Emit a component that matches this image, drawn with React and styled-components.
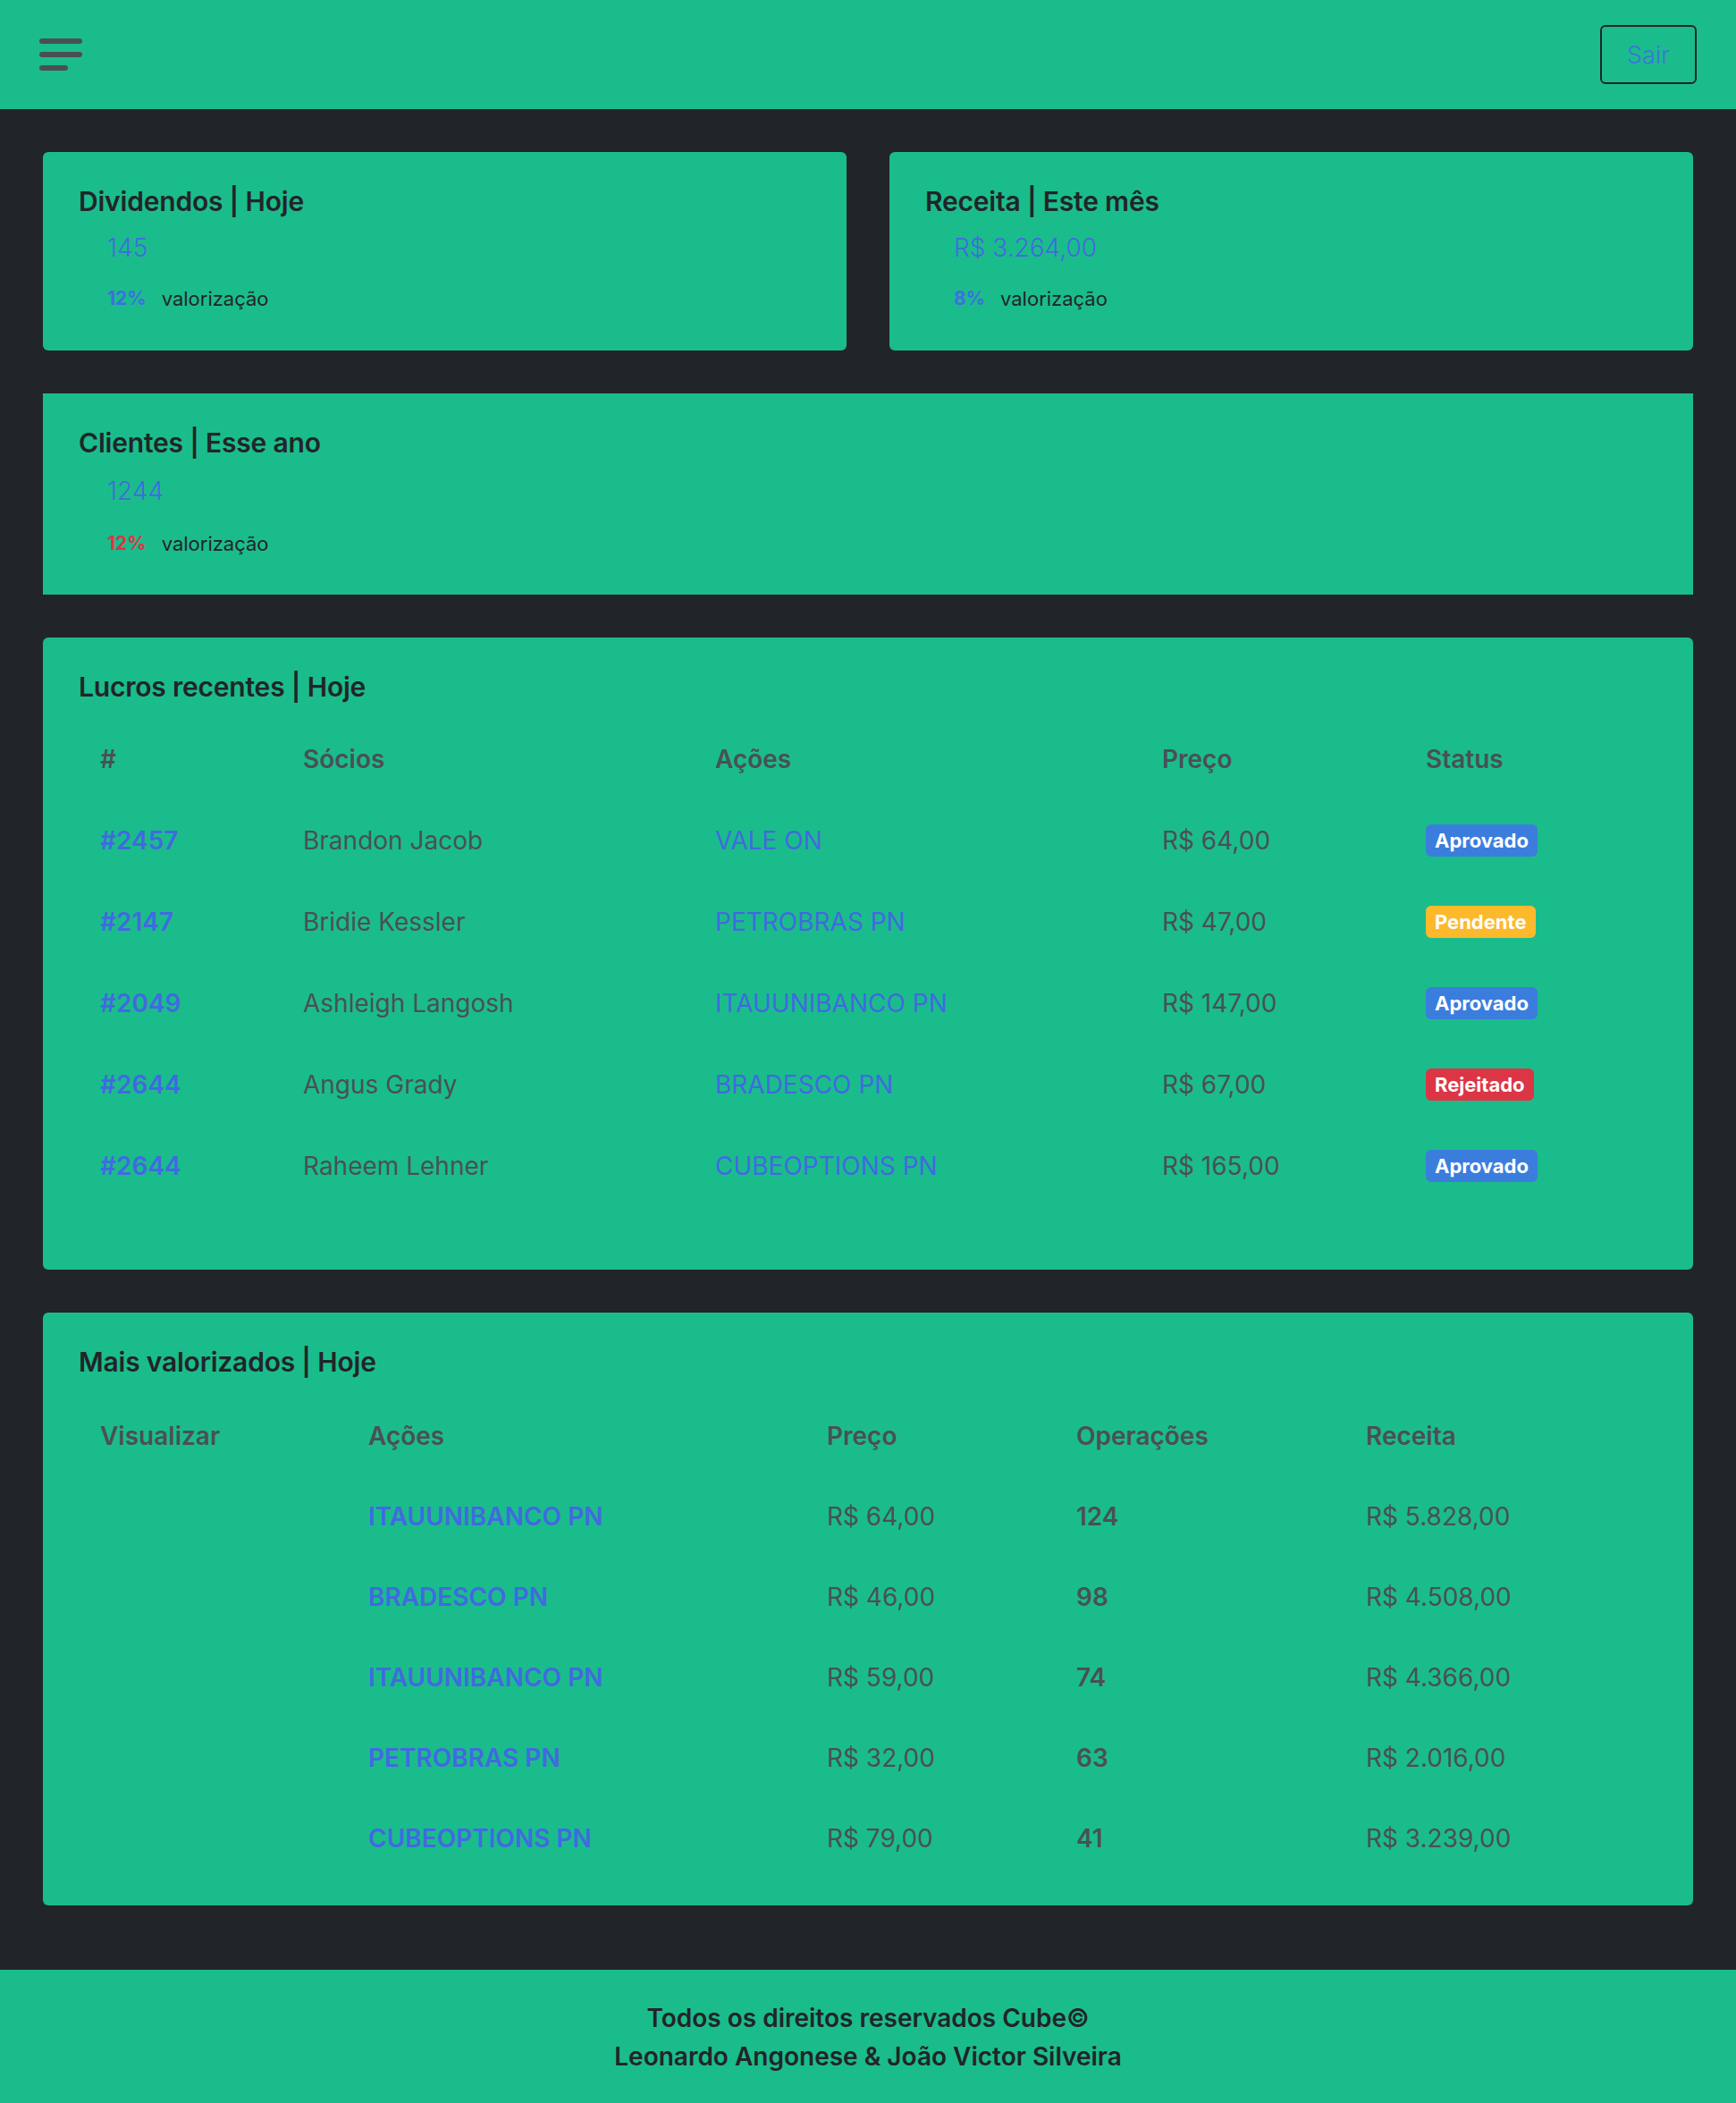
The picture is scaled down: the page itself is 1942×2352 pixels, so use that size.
import React from 'react';
import styled, {createGlobalStyle} from 'styled-components';

const GlobalStyle = createGlobalStyle`
  * {
    box-sizing: border-box;
  }
  body {
    margin: 0;
    background-color: #212529;
    font-family: Inter, "Noto Sans", "Liberation Sans", sans-serif;
  }
`;

const Page = styled.div`
  display: flex;
  flex-direction: column;
  min-height: 100vh;
  background-color: #212529;
`;

const Navbar = styled.header`
  height: 122px;
  display: flex;
  align-items: center;
  justify-content: space-between;
  padding: 0 44px 0 44px;
  background-color: #1bbc8b;
`;

const Burger = styled.button`
  display: flex;
  flex-direction: column;
  gap: 9px;
  width: 48px;
  padding: 0;
  border: none;
  background: none;
  cursor: pointer;
`;

const BurgerBar = styled.span`
  display: block;
  height: 6px;
  width: ${props => props.short ? '32px' : '48px'};
  border-radius: 3px;
  background-color: #4a4f57;
`;

const LogoutButton = styled.button`
  width: 108px;
  height: 66px;
  border: 2px solid #212529;
  border-radius: 6px;
  background: transparent;
  color: #3d73dc;
  font-family: inherit;
  font-size: 27px;
  font-weight: 300;
  cursor: pointer;
`;

const Main = styled.main`
  flex: 1;
  display: flex;
  flex-direction: column;
  gap: 48px;
  padding: 48px 48px 72px 48px;
`;

const StatRow = styled.div`
  display: grid;
  grid-template-columns: 1fr 1fr;
  gap: 48px;
`;

const Card = styled.section`
  background-color: #1bbc8b;
  border-radius: ${props => props.square ? '0' : '6px'};
  padding: 37px 40px ${props => props.bottom || 46}px 40px;
`;

const CardTitle = styled.h2`
  margin: 0;
  font-size: 30px;
  line-height: 36px;
  font-weight: 600;
  color: #212529;
  letter-spacing: -0.2px;
`;

const StatValue = styled.div`
  margin: ${props => props.roomy ? 18 : 16}px 0 0 32px;
  font-size: 28px;
  line-height: 36px;
  font-weight: 300;
  color: #4169e1;
`;

const StatFoot = styled.div`
  display: flex;
  align-items: center;
  gap: 17px;
  margin: ${props => props.roomy ? 29 : 27}px 0 0 32px;
  font-size: 22px;
  line-height: 24px;
  color: #212529;
`;

const Percent = styled.span`
  font-weight: 700;
  font-size: 21px;
  color: ${props => props.down ? '#dc3545' : '#3d6fe0'};
`;

const Table = styled.div`
  margin-top: ${props => props.offset}px;
  display: grid;
  grid-template-columns: ${props => props.columns};
  grid-auto-rows: ${props => props.rowHeight}px;
  align-items: center;
`;

const HeadCell = styled.div`
  padding-left: 24px;
  font-size: 28px;
  font-weight: 600;
  color: #495057;
`;

const Cell = styled.div`
  padding-left: 24px;
  font-size: 28px;
  font-weight: ${props => props.bold ? 600 : 400};
  color: ${props => props.link ? '#4169e1' : '#495057'};
  white-space: nowrap;
`;

const badgeColors = {
  Aprovado: '#3b7ddd',
  Pendente: '#fcb92c',
  Rejeitado: '#dc3545',
};

const Badge = styled.span`
  display: inline-block;
  padding: 6px 10px;
  border-radius: 6px;
  background-color: ${props => badgeColors[props.status]};
  color: #ffffff;
  font-size: 22px;
  line-height: 24px;
  font-weight: 700;
`;

const Footer = styled.footer`
  height: 149px;
  display: flex;
  flex-direction: column;
  align-items: center;
  justify-content: center;
  padding-top: 2px;
  background-color: #1bbc8b;
  color: #212529;
  font-size: 28px;
  line-height: 43px;
  font-weight: 600;
  text-align: center;
`;

const stats = [
  {title: 'Dividendos | Hoje', value: '145', pct: '12%'},
  {title: 'Receita | Este mês', value: 'R$ 3.264,00', pct: '8%'},
];

const lucros = [
  {id: '#2457', socio: 'Brandon Jacob', acao: 'VALE ON', preco: 'R$ 64,00', status: 'Aprovado'},
  {id: '#2147', socio: 'Bridie Kessler', acao: 'PETROBRAS PN', preco: 'R$ 47,00', status: 'Pendente'},
  {id: '#2049', socio: 'Ashleigh Langosh', acao: 'ITAUUNIBANCO PN', preco: 'R$ 147,00', status: 'Aprovado'},
  {id: '#2644', socio: 'Angus Grady', acao: 'BRADESCO PN', preco: 'R$ 67,00', status: 'Rejeitado'},
  {id: '#2644', socio: 'Raheem Lehner', acao: 'CUBEOPTIONS PN', preco: 'R$ 165,00', status: 'Aprovado'},
];

const valorizados = [
  {acao: 'ITAUUNIBANCO PN', preco: 'R$ 64,00', ops: '124', receita: 'R$ 5.828,00'},
  {acao: 'BRADESCO PN', preco: 'R$ 46,00', ops: '98', receita: 'R$ 4.508,00'},
  {acao: 'ITAUUNIBANCO PN', preco: 'R$ 59,00', ops: '74', receita: 'R$ 4.366,00'},
  {acao: 'PETROBRAS PN', preco: 'R$ 32,00', ops: '63', receita: 'R$ 2.016,00'},
  {acao: 'CUBEOPTIONS PN', preco: 'R$ 79,00', ops: '41', receita: 'R$ 3.239,00'},
];

const App = () => {
  return (
    <Page>
      <GlobalStyle/>
      <Navbar>
        <Burger aria-label="menu">
          <BurgerBar/>
          <BurgerBar/>
          <BurgerBar short/>
        </Burger>
        <LogoutButton>Sair</LogoutButton>
      </Navbar>

      <Main>
        <StatRow>
          {stats.map(s => (
            <Card key={s.title} bottom={46}>
              <CardTitle>{s.title}</CardTitle>
              <StatValue>{s.value}</StatValue>
              <StatFoot>
                <Percent>{s.pct}</Percent>
                valorização
              </StatFoot>
            </Card>
          ))}
        </StatRow>

        <Card square bottom={45}>
          <CardTitle>Clientes | Esse ano</CardTitle>
          <StatValue roomy>1244</StatValue>
          <StatFoot roomy>
            <Percent down>12%</Percent>
            valorização
          </StatFoot>
        </Card>

        <Card bottom={71}>
          <CardTitle>Lucros recentes | Hoje</CardTitle>
          <Table columns="227px 461px 500px 295px 1fr" rowHeight={91} offset={17}>
            <HeadCell>#</HeadCell>
            <HeadCell>Sócios</HeadCell>
            <HeadCell>Ações</HeadCell>
            <HeadCell>Preço</HeadCell>
            <HeadCell>Status</HeadCell>
            {lucros.map((r, i) => (
              <React.Fragment key={i}>
                <Cell link bold>{r.id}</Cell>
                <Cell>{r.socio}</Cell>
                <Cell link>{r.acao}</Cell>
                <Cell>{r.preco}</Cell>
                <Cell><Badge status={r.status}>{r.status}</Badge></Cell>
              </React.Fragment>
            ))}
          </Table>
        </Card>

        <Card bottom={30}>
          <CardTitle>Mais valorizados | Hoje</CardTitle>
          <Table columns="300px 513px 279px 324px 1fr" rowHeight={90} offset={20}>
            <HeadCell>Visualizar</HeadCell>
            <HeadCell>Ações</HeadCell>
            <HeadCell>Preço</HeadCell>
            <HeadCell>Operações</HeadCell>
            <HeadCell>Receita</HeadCell>
            {valorizados.map((r, i) => (
              <React.Fragment key={i}>
                <Cell/>
                <Cell link bold>{r.acao}</Cell>
                <Cell>{r.preco}</Cell>
                <Cell bold>{r.ops}</Cell>
                <Cell>{r.receita}</Cell>
              </React.Fragment>
            ))}
          </Table>
        </Card>
      </Main>

      <Footer>
        <div>Todos os direitos reservados Cube©</div>
        <div>Leonardo Angonese &amp; João Victor Silveira</div>
      </Footer>
    </Page>
  );
};

export default App;
